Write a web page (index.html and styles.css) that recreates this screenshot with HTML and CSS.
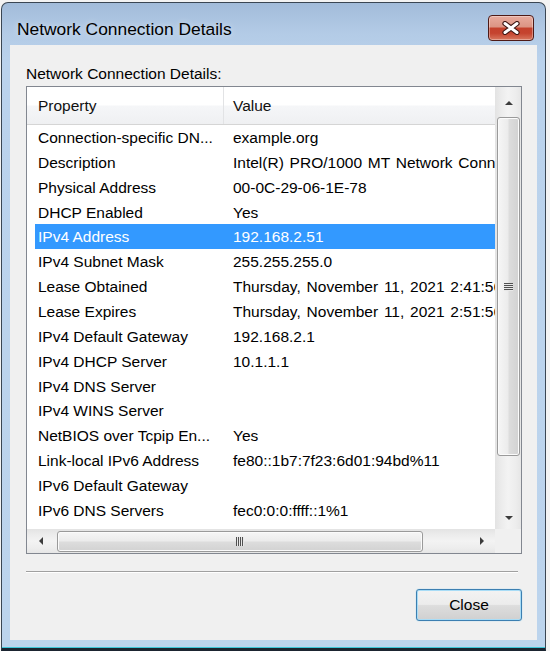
FILE: index.html
```html
<!DOCTYPE html>
<html>
<head>
<meta charset="utf-8">
<link rel="stylesheet" href="styles.css">
</head>
<body>
<div class="window">
  <div class="titlebar">
    <span class="title">Network Connection Details</span>
    <button class="closex" aria-label="Close">
      <svg width="18" height="14" viewBox="0 0 18 14">
        <path d="M3 2.5 L15 11.5 M15 2.5 L3 11.5" stroke="#3b1512" stroke-width="5.2" stroke-linecap="round" fill="none"/>
        <path d="M3 2.5 L15 11.5 M15 2.5 L3 11.5" stroke="#ffffff" stroke-width="3" stroke-linecap="round" fill="none"/>
      </svg>
    </button>
  </div>
  <div class="client">
    <div class="label">Network Connection Details:</div>
    <div class="listbox">
      <div class="list">
        <div class="header">
          <div class="hcell prop">Property</div>
          <div class="hcell val">Value</div>
        </div>
        <div class="row"><span class="p">Connection-specific DN...</span><span class="v">example.org</span></div>
        <div class="row"><span class="p">Description</span><span class="v">Intel(R) PRO/1000 MT Network Connection</span></div>
        <div class="row"><span class="p">Physical Address</span><span class="v">00-0C-29-06-1E-78</span></div>
        <div class="row"><span class="p">DHCP Enabled</span><span class="v">Yes</span></div>
        <div class="row sel"><span class="p">IPv4 Address</span><span class="v">192.168.2.51</span></div>
        <div class="row"><span class="p">IPv4 Subnet Mask</span><span class="v">255.255.255.0</span></div>
        <div class="row"><span class="p">Lease Obtained</span><span class="v">Thursday, November 11, 2021 2:41:56 PM</span></div>
        <div class="row"><span class="p">Lease Expires</span><span class="v">Thursday, November 11, 2021 2:51:56 PM</span></div>
        <div class="row"><span class="p">IPv4 Default Gateway</span><span class="v">192.168.2.1</span></div>
        <div class="row"><span class="p">IPv4 DHCP Server</span><span class="v">10.1.1.1</span></div>
        <div class="row"><span class="p">IPv4 DNS Server</span><span class="v"></span></div>
        <div class="row"><span class="p">IPv4 WINS Server</span><span class="v"></span></div>
        <div class="row"><span class="p">NetBIOS over Tcpip En...</span><span class="v">Yes</span></div>
        <div class="row"><span class="p">Link-local IPv6 Address</span><span class="v">fe80::1b7:7f23:6d01:94bd%11</span></div>
        <div class="row"><span class="p">IPv6 Default Gateway</span><span class="v"></span></div>
        <div class="row"><span class="p">IPv6 DNS Servers</span><span class="v">fec0:0:0:ffff::1%1</span></div>
        <div class="row"><span class="p"></span><span class="v">fec0:0:0:ffff::2%1</span></div>
      </div>
      <div class="vscroll">
        <div class="vbtn"><span class="tri up"></span></div>
        <div class="vtrack">
          <div class="vthumb"><span class="grip-v"></span></div>
        </div>
        <div class="vbtn"><span class="tri down"></span></div>
      </div>
      <div class="hscroll">
        <div class="hbtn left-btn"><span class="tri left"></span></div>
        <div class="htrack">
          <div class="hthumb"><span class="grip-h"></span></div>
        </div>
        <div class="hbtn right-btn"><span class="tri right"></span></div>
      </div>
      <div class="corner"></div>
    </div>
    <div class="sep"></div>
    <div class="actions">
      <button class="btn">Close</button>
    </div>
  </div>
</div>
</body>
</html>
```
FILE: styles.css
```css
* { box-sizing: border-box; }

body {
  margin: 0;
  background: #f3f3f3;
  font-family: "Liberation Sans", Arial, sans-serif;
}

.window {
  margin: 2px 0 0 1px;
  width: 545px;
  height: 649px;
  border: 1px solid #3a4653;
  border-bottom: 3px solid #1b2430;
  border-radius: 7px 7px 0 0;
  background: linear-gradient(to bottom, #a2bcda 0, #b3cbe6 30px, #bad2ec 60px, #bcd4ed 100%);
  box-shadow: inset 0 -1px 0 #3fc6d8;
  padding: 0 8px 8px 8px;
  display: flex;
  flex-direction: column;
}

.titlebar {
  height: 42px;
  margin: 0 -8px;
  padding: 12px 11px 0 15px;
  display: flex;
  align-items: flex-start;
  justify-content: space-between;
}

.title {
  font-size: 17.4px;
  line-height: 26px;
  padding-top: 1px;
  color: #000;
  text-shadow: 0 0 6px rgba(255,255,255,0.6);
}

.closex {
  width: 46px;
  height: 26px;
  padding: 0;
  border: 1px solid #4e1a16;
  border-radius: 4px;
  background: linear-gradient(to bottom, #e8ab9e 0, #dc9584 44%, #c4412c 52%, #c5442f 72%, #d8785f 100%);
  box-shadow: inset 0 0 0 1px rgba(255,255,255,0.35);
  display: flex;
  align-items: center;
  justify-content: center;
}

.client {
  flex: 1;
  background: #f0f0f0;
  padding: 20px 15px 0 16px;
  display: flex;
  flex-direction: column;
}

.label {
  font-size: 15.5px;
  line-height: 18px;
  height: 18px;
  color: #000;
}

.listbox {
  margin-top: 3px;
  width: 496px;
  height: 468px;
  border: 1px solid #828790;
  background: #fff;
  display: grid;
  grid-template-columns: 468px 26px;
  grid-template-rows: 442px 24px;
}

.list {
  overflow: hidden;
  font-size: 15.5px;
  color: #000;
}

.header {
  height: 38px;
  display: flex;
  border-bottom: 1px solid #d5d5d5;
  background: linear-gradient(to bottom, #ffffff 0, #ffffff 48%, #f5f6f8 52%, #eff0f2 100%);
}

.hcell {
  line-height: 38px;
  white-space: nowrap;
  color: #111;
}

.hcell.prop {
  width: 197px;
  padding-left: 11px;
  border-right: 1px solid #e2e3e5;
}

.hcell.val {
  padding-left: 9px;
}

.row {
  height: 24.87px;
  line-height: 24.87px;
  margin-left: 8px;
  display: grid;
  grid-template-columns: 198px auto;
  white-space: nowrap;
}

.row .p,
.row .v {
  padding-top: 1px;
}

.row .p {
  padding-left: 3px;
  overflow: hidden;
}

.row .v {
  word-spacing: 1.5px;
}

.row.sel {
  background: #3399ff;
  color: #fff;
}

/* vertical scrollbar */
.vscroll {
  display: flex;
  flex-direction: column;
  background: linear-gradient(to right, #e3e3e3 0, #ececec 25%, #f3f3f3 50%, #ededed 80%, #e6e6e6 100%);
}

.vbtn {
  height: 26px;
  display: flex;
  align-items: center;
  justify-content: center;
  padding-left: 1px;
}

.vtrack {
  flex: 1;
  padding: 4px 1px 0 2px;
}

.vthumb {
  height: 339px;
  border: 1px solid #9a9a9a;
  border-radius: 3px;
  background: linear-gradient(to right, #f6f6f6 0, #ececec 45%, #dcdcdc 55%, #d2d2d2 100%);
  box-shadow: inset 0 0 0 1px #fbfbfb;
  display: flex;
  align-items: center;
  justify-content: center;
}

.grip-v {
  width: 9px;
  height: 8px;
  background: repeating-linear-gradient(to bottom, #505050 0, #505050 1px, #e8e8e8 1px, #e8e8e8 2px);
}

/* horizontal scrollbar */
.hscroll {
  display: flex;
  background: linear-gradient(to bottom, #e3e3e3 0, #ececec 25%, #f3f3f3 50%, #ededed 80%, #e6e6e6 100%);
}

.hbtn {
  display: flex;
  align-items: center;
  justify-content: center;
}

.left-btn { width: 28px; }
.right-btn { width: 26px; }

.htrack {
  flex: 1;
  padding: 2px 0 1px 2px;
}

.hthumb {
  width: 366px;
  height: 100%;
  border: 1px solid #9a9a9a;
  border-radius: 3px;
  background: linear-gradient(to bottom, #f6f6f6 0, #ececec 45%, #dcdcdc 55%, #d2d2d2 100%);
  box-shadow: inset 0 0 0 1px #fbfbfb;
  display: flex;
  align-items: center;
  justify-content: center;
}

.grip-h {
  width: 8px;
  height: 9px;
  background: repeating-linear-gradient(to right, #505050 0, #505050 1px, #e8e8e8 1px, #e8e8e8 2px);
}

.corner {
  background: #f0f0f0;
}

.tri {
  width: 0;
  height: 0;
  border-style: solid;
}

.tri.up {
  border-width: 0 4px 4px 4px;
  border-color: transparent transparent #3c3c3c transparent;
  margin-top: 6px;
}

.tri.down {
  border-width: 4px 4px 0 4px;
  border-color: #3c3c3c transparent transparent transparent;
  margin-top: 4px;
}

.tri.left {
  border-width: 4px 4px 4px 0;
  border-color: transparent #3c3c3c transparent transparent;
}

.tri.right {
  border-width: 4px 0 4px 4px;
  border-color: transparent transparent transparent #3c3c3c;
}

.sep {
  width: 492px;
  height: 2px;
  margin-top: 17px;
  border-top: 1px solid #a0a0a0;
  border-bottom: 1px solid #ffffff;
}

.actions {
  display: flex;
  justify-content: flex-end;
  margin-top: 16px;
}

.btn {
  width: 106px;
  height: 32px;
  padding: 0;
  border: 1px solid #3c7fb1;
  border-radius: 3px;
  background: linear-gradient(to bottom, #f3f3f3 0, #ececec 48%, #dddddd 52%, #d0d0d0 100%);
  box-shadow: inset 0 0 0 1px #a8dcf6, 0 0 1px #5fc3f0;
  font-family: "Liberation Sans", Arial, sans-serif;
  font-size: 15.5px;
  color: #000;
}
```
